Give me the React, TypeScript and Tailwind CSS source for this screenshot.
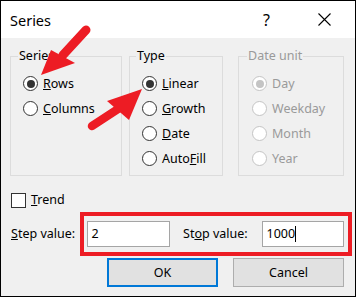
import React from "react";

function Radio({ checked, disabled }: { checked?: boolean; disabled?: boolean }) {
  return (
    <span
      className={
        disabled
          ? "w-[15px] h-[15px] rounded-full border border-[#c4c4c4] bg-white flex items-center justify-center shrink-0"
          : "w-[15px] h-[15px] rounded-full border border-[#333333] bg-white flex items-center justify-center shrink-0"
      }
    >
      {checked && (
        <span
          className={
            disabled
              ? "w-[8px] h-[8px] rounded-full bg-[#c4c4c4]"
              : "w-[8px] h-[8px] rounded-full bg-[#333333]"
          }
        />
      )}
    </span>
  );
}

function Opt({
  label,
  checked,
  disabled,
}: {
  label: React.ReactNode;
  checked?: boolean;
  disabled?: boolean;
}) {
  return (
    <div className="h-[25px] flex items-center gap-[5px]">
      <Radio checked={checked} disabled={disabled} />
      <span className={disabled ? "text-[#9a9a9a]" : "text-black"}>{label}</span>
    </div>
  );
}

export default function App() {
  return (
    <div
      className="relative w-[356px] h-[297px] border border-black bg-[#f0f0f0] text-[12.5px] leading-[18px] text-black overflow-hidden"
      style={{ fontFamily: '"Noto Sans", "Segoe UI", sans-serif' }}
    >
      {/* Title bar */}
      <div className="h-[37px] bg-white flex items-center pl-[9px] pr-[24px]">
        <span className="text-[14.5px] flex-1">Series</span>
        <span className="text-[16px] mr-[48px]">?</span>
        <svg width="13" height="13" viewBox="0 0 13 13">
          <path d="M0.5 0.5 L12.5 12.5 M12.5 0.5 L0.5 12.5" stroke="#000" strokeWidth="1.1" />
        </svg>
      </div>

      {/* Body */}
      <div className="pl-[9px] pr-[11px] pt-[9px]">
        <div className="flex">
          <fieldset className="w-[112px] h-[129px] border border-[#dcdcdc]">
            <legend className="ml-[7px] px-[1px]">Series</legend>
            <div className="pl-[12px] pt-[6px]">
              <Opt checked label={<><u>R</u>ows</>} />
              <Opt label={<><u>C</u>olumns</>} />
            </div>
          </fieldset>
          <fieldset className="w-[94px] h-[129px] ml-[7px] border border-[#dcdcdc]">
            <legend className="ml-[6px] px-[1px]">Type</legend>
            <div className="pl-[12px] pt-[6px]">
              <Opt checked label={<><u>L</u>inear</>} />
              <Opt label={<><u>G</u>rowth</>} />
              <Opt label={<><u>D</u>ate</>} />
              <Opt label={<>Auto<u>F</u>ill</>} />
            </div>
          </fieldset>
          <fieldset className="w-[106px] h-[129px] ml-[15px] border border-[#dcdcdc]">
            <legend className="ml-[8px] px-[1px] text-[#9a9a9a]">Date unit</legend>
            <div className="pl-[13px] pt-[6px]">
              <Opt checked disabled label="Day" />
              <Opt disabled label="Weekday" />
              <Opt disabled label="Month" />
              <Opt disabled label="Year" />
            </div>
          </fieldset>
        </div>

        {/* Trend */}
        <div className="mt-[14px] h-[20px] flex items-center gap-[5px] pl-[1px]">
          <span className="w-[15px] h-[15px] border border-[#333333] bg-white" />
          <span>
            <u>T</u>rend
          </span>
        </div>

        {/* Step / Stop */}
        <div className="mt-[11px] h-[26px] flex items-center">
          <span className="w-[77px] pl-[1px]">
            <u>S</u>tep value:
          </span>
          <div className="w-[84px] h-[26px] border border-[#a5a5a5] bg-white flex items-center pl-[4px]">2</div>
          <span className="ml-[13px] w-[79px]">
            St<u>o</u>p value:
          </span>
          <div className="w-[83px] h-[26px] border border-[#a5a5a5] bg-white flex items-center pl-[4px]">
            1000
            <span className="w-[1px] h-[16px] bg-black" />
          </div>
        </div>

        {/* Buttons */}
        <div className="mt-[11px] flex justify-end gap-[15px]">
          <button className="w-[111px] h-[29px] border-2 border-[#0078d7] bg-[#e1e1e1]">OK</button>
          <button className="w-[111px] h-[29px] border border-[#adadad] bg-[#e1e1e1]">Cancel</button>
        </div>
      </div>

      {/* Red highlight overlay */}
      <div className="absolute left-[79px] top-[211px] w-[272px] h-[44px] border-4 border-[#ed1c24] pointer-events-none" />

      {/* Arrows overlay */}
      <svg className="absolute left-0 top-0 pointer-events-none" width="356" height="297" viewBox="0 0 356 297">
        <line x1="85" y1="29" x2="62" y2="54" stroke="#ed1c24" strokeWidth="9" strokeLinecap="round" />
        <polygon points="40,74 50,49 74,62" fill="#ed1c24" />
        <line x1="91" y1="125" x2="117" y2="108" stroke="#ed1c24" strokeWidth="8.5" strokeLinecap="round" />
        <polygon points="141,88 106,100 128,119" fill="#ed1c24" />
      </svg>
    </div>
  );
}
